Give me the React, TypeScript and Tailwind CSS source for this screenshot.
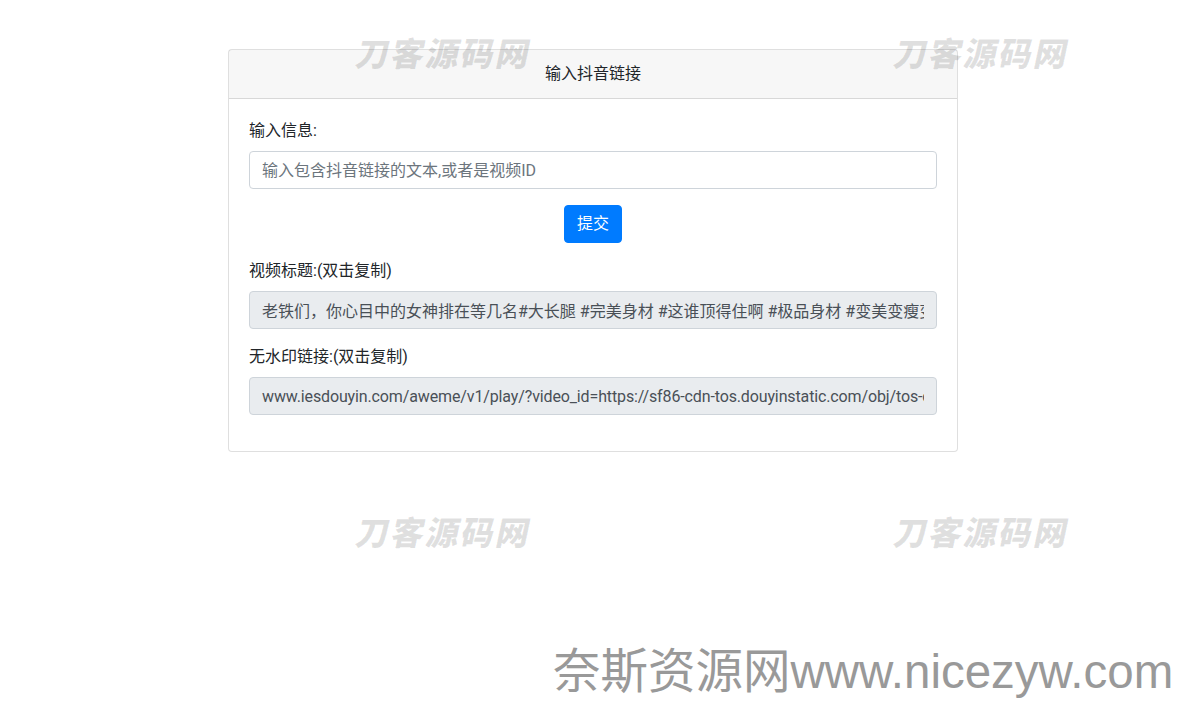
import { useState } from "react";

const font = "font-['Segoe_UI','Microsoft_YaHei',Roboto,'Noto_Sans_CJK_SC',sans-serif]";

const Watermark = ({ className }: { className: string }) => (
  <div
    className={`pointer-events-none absolute select-none text-[33px] leading-none font-black tracking-[2px] text-black/[0.12] -skew-x-12 font-['Noto_Sans_CJK_SC',sans-serif] ${className}`}
  >
    刀客源码网
  </div>
);

export default function App() {
  const [text, setText] = useState("");
  const title =
    "老铁们，你心目中的女神排在等几名#大长腿 #完美身材 #这谁顶得住啊 #极品身材 #变美变瘦变美变瘦 #身材管理";
  const link =
    "www.iesdouyin.com/aweme/v1/play/?video_id=https://sf86-cdn-tos.douyinstatic.com/obj/tos-cn-ve-15/4a3b2c1d&ratio=720p&line=0";

  return (
    <div className={`relative min-h-[715px] w-full overflow-hidden bg-white text-[16px] leading-6 text-[#212529] ${font}`}>
      <div className="flex justify-center pl-[3px] pt-[49px]">
        <div className="w-[730px] rounded border border-black/[0.125] bg-white">
          <div className="border-b border-black/[0.125] bg-black/[0.03] px-5 py-3 text-center">
            输入抖音链接
          </div>
          <div className="flex flex-col gap-4 p-5 pb-9">
            <div>
              <label className="mb-2 block">输入信息:</label>
              <input
                value={text}
                onChange={(e) => setText(e.target.value)}
                placeholder="输入包含抖音链接的文本,或者是视频ID"
                className="block h-[38px] w-full rounded border border-[#ced4da] bg-white px-3 py-1.5 text-[#495057] outline-none placeholder:text-[#6c757d]"
              />
            </div>
            <div className="flex justify-center">
              <button className="h-[38px] rounded border border-[#007bff] bg-[#007bff] px-3 text-white">
                提交
              </button>
            </div>
            <div>
              <label className="mb-2 block">视频标题:(双击复制)</label>
              <input
                readOnly
                value={title}
                className="block h-[38px] w-full rounded border border-[#ced4da] bg-[#e9ecef] px-3 py-1.5 text-[#495057] outline-none"
              />
            </div>
            <div>
              <label className="mb-2 block">无水印链接:(双击复制)</label>
              <input
                readOnly
                value={link}
                className="block h-[38px] w-full rounded border border-[#ced4da] bg-[#e9ecef] px-3 py-1.5 tracking-[-0.13px] text-[#495057] outline-none"
              />
            </div>
          </div>
        </div>
      </div>

      <Watermark className="left-[357px] top-[36px]" />
      <Watermark className="left-[895px] top-[36px]" />
      <Watermark className="left-[357px] top-[515px]" />
      <Watermark className="left-[895px] top-[515px]" />

      <div className="pointer-events-none absolute left-[553px] top-[648px] whitespace-nowrap text-[47.5px] leading-none text-[#999999] font-['Liberation_Sans','Noto_Sans_CJK_SC',sans-serif]">
        奈斯资源网www.nicezyw.com
      </div>
    </div>
  );
}
